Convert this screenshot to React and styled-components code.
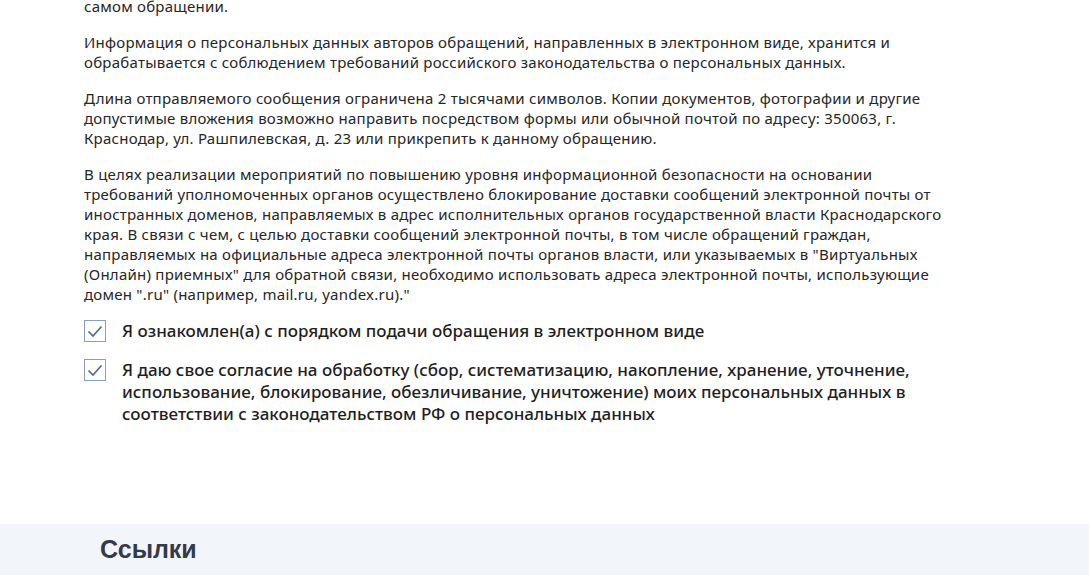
import React from 'react'
import styled, { createGlobalStyle } from 'styled-components'

const GlobalStyle = createGlobalStyle`
  body {
    margin: 0;
    background: #fff;
    font-family: 'Noto Sans', 'Open Sans', sans-serif;
    color: #222;
  }
`

const Main = styled.main`
  padding: 0 60px 99px 84px;
  display: flex;
  flex-direction: column;
`

const Paragraph = styled.p`
  margin: 0 0 16px;
  font-size: 15px;
  letter-spacing: 0.24px;
  line-height: 20px;
  color: #262626;
  &:first-child {
    margin-top: -4px;
  }
`

const Agreements = styled.div`
  display: flex;
  flex-direction: column;
  gap: 17px;
`

const CheckRow = styled.label`
  display: flex;
  align-items: flex-start;
  gap: 16px;
  font-size: 17px;
  line-height: 22px;
  font-weight: 500;
  color: #1f1f1f;
`

const Box = styled.span`
  flex: 0 0 auto;
  width: 20px;
  height: 20px;
  border: 1px solid #86a0c2;
  display: flex;
  align-items: center;
  justify-content: center;
`

const Footer = styled.footer`
  background: #f2f5fa;
  padding: 10px 100px 20px;
`

const FooterTitle = styled.h2`
  margin: 0;
  font-family: 'Liberation Sans', Arial, sans-serif;
  font-size: 25px;
  line-height: 30px;
  font-weight: 700;
  color: #333a4b;
`

const Check = ({ children }) => (
  <CheckRow>
    <Box>
      <svg width="16" height="13" viewBox="0 0 16 13" fill="none">
        <path d="M1.5 6.5 L6 11 L14.5 1.5" stroke="#4a6d9c" strokeWidth="1.7" />
      </svg>
    </Box>
    <span>{children}</span>
  </CheckRow>
)

const App = () => {
  return (
    <>
      <GlobalStyle />
      <Main>
        <Paragraph>самом обращении.</Paragraph>
        <Paragraph>
          Информация о персональных данных авторов обращений, направленных в электронном виде, хранится и<br />
          обрабатывается с соблюдением требований российского законодательства о персональных данных.
        </Paragraph>
        <Paragraph>
          Длина отправляемого сообщения ограничена 2 тысячами символов. Копии документов, фотографии и другие<br />
          допустимые вложения возможно направить посредством формы или обычной почтой по адресу: 350063, г.<br />
          Краснодар, ул. Рашпилевская, д. 23 или прикрепить к данному обращению.
        </Paragraph>
        <Paragraph>
          В целях реализации мероприятий по повышению уровня информационной безопасности на основании<br />
          требований уполномоченных органов осуществлено блокирование доставки сообщений электронной почты от<br />
          иностранных доменов, направляемых в адрес исполнительных органов государственной власти Краснодарского<br />
          края. В связи с чем, с целью доставки сообщений электронной почты, в том числе обращений граждан,<br />
          направляемых на официальные адреса электронной почты органов власти, или указываемых в "Виртуальных<br />
          (Онлайн) приемных" для обратной связи, необходимо использовать адреса электронной почты, использующие<br />
          домен ".ru" (например, mail.ru, yandex.ru)."
        </Paragraph>
        <Agreements>
          <Check>Я ознакомлен(а) с порядком подачи обращения в электронном виде</Check>
          <Check>
            Я даю свое согласие на обработку (сбор, систематизацию, накопление, хранение, уточнение,<br />
            использование, блокирование, обезличивание, уничтожение) моих персональных данных в<br />
            соответствии с законодательством РФ о персональных данных
          </Check>
        </Agreements>
      </Main>
      <Footer>
        <FooterTitle>Ссылки</FooterTitle>
      </Footer>
    </>
  )
}

export default App
